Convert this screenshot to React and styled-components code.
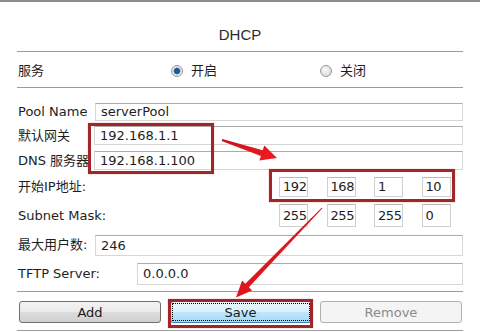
import React from 'react'
import styled, { createGlobalStyle } from 'styled-components'

const GlobalStyle = createGlobalStyle`
  body {
    margin: 0;
    background: #fff;
    font-family: "DejaVu Sans", Verdana, "Noto Sans CJK SC", sans-serif;
  }
`

const fields = [
    { label: 'Pool Name', value: 'serverPool', lw: 78, h: 23, ih: 18 },
    { label: '默认网关', value: '192.168.1.1', lw: 77, h: 25, ih: 19 },
    { label: 'DNS 服务器', value: '192.168.1.100', lw: 77, h: 25, ih: 19 },
    { label: '开始IP地址:', octets: ['192', '168', '1', '10'], lw: 262, h: 27, ih: 20 },
    { label: 'Subnet Mask:', octets: ['255', '255', '255', '0'], lw: 262, h: 31, ih: 23 },
    { label: '最大用户数:', value: '246', lw: 78, h: 28, ih: 21 },
    { label: 'TFTP Server:', value: '0.0.0.0', lw: 120, h: 29, ih: 22 },
]

function App() {
    return (
        <>
            <GlobalStyle />
            <Panel>
                <TopBar />
                <Title>DHCP</Title>

                <ServiceRow>
                    <Label $w={154}>服务</Label>
                    <Option $w={149}>
                        <Radio $checked />
                        开启
                    </Option>
                    <Option>
                        <Radio />
                        关闭
                    </Option>
                </ServiceRow>

                <Form>
                    {
                        fields.map((f) => {
                            return (
                                <Row key={f.label} $h={f.h}>
                                    <Label $w={f.lw}>{f.label}</Label>
                                    {
                                        f.octets ? (
                                            <Octets>
                                                {f.octets.map((o, i) => (
                                                    <Octet key={i} $h={f.ih}>{o}</Octet>
                                                ))}
                                            </Octets>
                                        ) : (
                                            <TextInput $h={f.ih} readOnly defaultValue={f.value} />
                                        )
                                    }
                                </Row>
                            )
                        })
                    }
                </Form>

                <Buttons>
                    <Button>Add</Button>
                    <Button $primary>Save</Button>
                    <Button $disabled>Remove</Button>
                </Buttons>

                <Highlight $x={88} $y={123} $w={126} $h={51} />
                <Highlight $x={269} $y={169} $w={186} $h={33} />
                <Highlight $x={168} $y={299} $w={145} $h={29} />

                <Arrows width="480" height="332" viewBox="0 0 480 332">
                    <defs>
                        <linearGradient id="red" x1="0" y1="0" x2="1" y2="1">
                            <stop offset="0" stopColor="#c8101a" />
                            <stop offset="1" stopColor="#f01e22" />
                        </linearGradient>
                    </defs>
                    <polygon
                        fill="url(#red)"
                        points="221.7,141 260.9,155.9 259.3,160.6 277,158 264.3,145.4 262.7,150.2 222.3,139.1"
                    />
                    <polygon
                        fill="url(#red)"
                        points="322.4,208.3 248.9,287.2 252.1,290.4 236,297.5 242.1,280.6 245.3,283.8 321.6,207.7"
                    />
                </Arrows>
            </Panel>
        </>
    )
}

export default App



const Panel = styled.div`
    position: relative;
    width: 480px;
    height: 332px;
    overflow: hidden;
    background: #fff;
    color: #222;
`

const TopBar = styled.div`
    height: 2px;
    background: #8c8c8c;
`

const Title = styled.div`
    box-sizing: border-box;
    height: 50px;
    margin: 0 17px;
    padding-top: 23px;
    line-height: 20px;
    text-align: center;
    font-family: "Liberation Sans", Arial, sans-serif;
    font-size: 15px;
    color: #2a2a2a;
    border-bottom: 1px solid #9d9d9d;
`

const ServiceRow = styled.div`
    box-sizing: border-box;
    height: 36px;
    margin: 0 17px;
    padding-top: 3px;
    display: flex;
    align-items: center;
    border-bottom: 1px solid #9d9d9d;
`

const Label = styled.div`
    flex: none;
    width: ${(p) => p.$w}px;
    padding-left: 1px;
    box-sizing: border-box;
    font-size: 13px;
    line-height: 16px;
    white-space: nowrap;
    color: #1e1e1e;
`

const Option = styled.div`
    display: flex;
    align-items: center;
    gap: 8px;
    width: ${(p) => (p.$w ? `${p.$w}px` : 'auto')};
    font-size: 13px;
    line-height: 16px;
    color: #1e1e1e;
`

const Radio = styled.span`
    box-sizing: border-box;
    width: 12px;
    height: 12px;
    border-radius: 50%;
    border: 1px solid #9a9a9a;
    background: ${(p) =>
        p.$checked
            ? 'radial-gradient(circle, #1d5a94 0 2.6px, #5d8fc0 3.2px, #eef0f2 3.8px, #c4c6c8 100%)'
            : 'radial-gradient(circle at 40% 35%, #fafafa, #cfd0d1)'};
`

const Form = styled.div`
    margin: 0 17px;
    padding: 12px 0 3px;
    border-bottom: 1px solid #9d9d9d;
`

const Row = styled.div`
    height: ${(p) => p.$h}px;
    display: flex;
    align-items: center;
`

const TextInput = styled.input`
    flex: 1;
    min-width: 0;
    box-sizing: border-box;
    height: ${(p) => p.$h}px;
    margin: 0;
    padding: 0 5px;
    border: 1px solid #d6d6d6;
    border-top-color: #ababab;
    background: #fff;
    font-family: "DejaVu Sans", Verdana, sans-serif;
    font-size: 13px;
    color: #1e1e1e;
    outline: none;
`

const Octets = styled.div`
    display: flex;
    gap: 18.5px;
`

const Octet = styled.div`
    box-sizing: border-box;
    width: 29px;
    height: ${(p) => p.$h}px;
    display: flex;
    align-items: center;
    padding-left: 3px;
    overflow: hidden;
    white-space: nowrap;
    border: 1px solid #d0d0d0;
    border-top-color: #b8b8b8;
    background: #fff;
    font-size: 13px;
    letter-spacing: -0.4px;
    color: #1e1e1e;
`

const Buttons = styled.div`
    margin: 0 17px;
    padding: 9px 0 7px 2px;
    display: flex;
    gap: 8.5px;
    border-bottom: 1px solid #9d9d9d;
`

const Button = styled.div`
    box-sizing: border-box;
    width: 142px;
    height: 22px;
    display: flex;
    align-items: center;
    justify-content: center;
    border-radius: 3px;
    font-size: 13px;
    border: 1px solid ${(p) => (p.$primary ? '#3c7fb1' : p.$disabled ? '#adb2b5' : '#707070')};
    color: ${(p) => (p.$disabled ? '#8a8a8a' : '#1a1a1a')};
    background: ${(p) =>
        p.$primary
            ? 'linear-gradient(#eaf6fd, #d9f0fc 50%, #bee6fd 51%, #a7d9f5)'
            : p.$disabled
            ? '#f4f4f4'
            : 'linear-gradient(#f2f2f2, #ebebeb 50%, #dddddd 51%, #cfcfcf)'};
    outline: ${(p) => (p.$primary ? '1px dotted #000' : 'none')};
    outline-offset: -3px;
`

const Highlight = styled.div`
    position: absolute;
    left: ${(p) => p.$x}px;
    top: ${(p) => p.$y}px;
    width: ${(p) => p.$w}px;
    height: ${(p) => p.$h}px;
    box-sizing: border-box;
    border: 3px solid #a3252a;
    box-shadow: 0 0 1px rgba(163, 37, 42, 0.5);
    pointer-events: none;
`

const Arrows = styled.svg`
    position: absolute;
    left: 0;
    top: 0;
    pointer-events: none;
`
